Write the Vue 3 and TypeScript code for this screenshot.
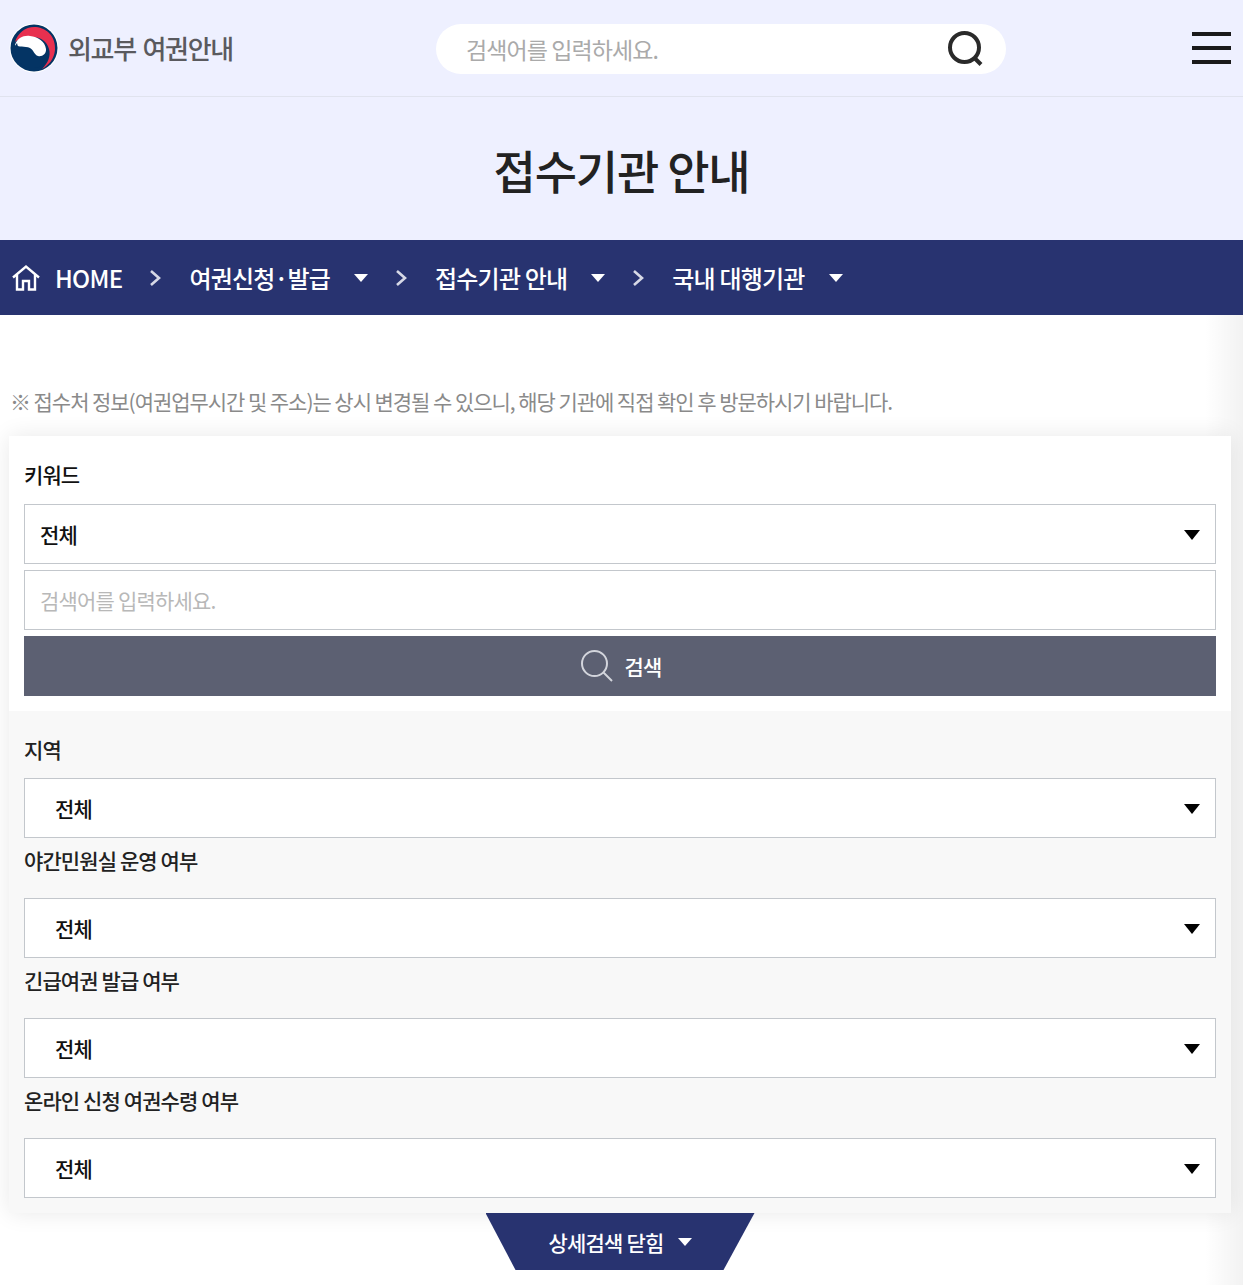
<script setup lang="ts">
const crumbs = ['여권신청·발급', '접수기관 안내', '국내 대행기관']
const filters = ['지역', '야간민원실 운영 여부', '긴급여권 발급 여부', '온라인 신청 여권수령 여부']
</script>

<template>
  <div class="page">
    <header class="top">
      <div class="logo">
        <svg width="50" height="50" viewBox="0 0 50 50">
          <circle cx="25" cy="25" r="24.5" fill="#fff" />
          <circle cx="25" cy="25" r="23.5" fill="#043464" />
          <path d="M6 19C9 9 18 3 27 4C38 5 47 14 46 27C45 36 40 42 33 46C39 40 42 33 40 26C38 18 31 14 24 14C16 14 9 16 6 19Z" fill="#e8304f" />
          <path d="M6 22C8 15 15 12 21 13C29 14 36 18 37 26C37.500 31 33 34 29 33C25 32 25 27 21 25C16 22.500 9 25 6 22Z" fill="#fff" />
          <path d="M8 20C9 27 14 25 19 26C23 27 24 33 30 34C35 34.500 39 30 38 24C42 33 37 44 25 45C14 46 5 36 6 25C6.200 23 7 21 8 20Z" fill="#043464" />
        </svg>
        <span class="logo-text">외교부 여권안내</span>
      </div>
      <div class="top-search">
        <span class="top-placeholder">검색어를 입력하세요.</span>
        <svg width="40" height="40" viewBox="0 0 40 40" fill="none" stroke="#2a2a2a">
          <circle cx="18.500" cy="18.500" r="14.500" stroke-width="4" />
          <path d="M28.500 29L35 35.500" stroke-width="4" />
        </svg>
      </div>
      <button class="menu" aria-label="menu"><i></i><i></i><i></i></button>
    </header>

    <section class="title">
      <h1>접수기관 안내</h1>
    </section>

    <nav class="crumbs">
      <svg class="home" width="30" height="28" viewBox="0 0 30 28" fill="none" stroke="#fff" stroke-width="2.400">
        <path d="M2 13.500L15 2.500L28 13.500" />
        <path d="M6 11V25.500H12V17H18V25.500H24V11" />
      </svg>
      <span class="home-text">HOME</span>
      <template v-for="c in crumbs" :key="c">
        <svg class="sep" width="12" height="18" viewBox="0 0 12 18" fill="none" stroke="#d7d9e6" stroke-width="2.600">
          <path d="M2 2L10 9L2 16" />
        </svg>
        <span class="crumb">{{ c }}</span>
        <span class="caret"></span>
      </template>
    </nav>

    <p class="note">※ 접수처 정보(여권업무시간 및 주소)는 상시 변경될 수 있으니, 해당 기관에 직접 확인 후 방문하시기 바랍니다.</p>

    <div class="panel">
      <div class="keyword">
        <div class="label first">키워드</div>
        <div class="field keyword-field">
          전체
          <span class="arrow"></span>
        </div>
        <div class="field input">검색어를 입력하세요.</div>
        <button class="search-btn">
          <svg width="36" height="36" viewBox="0 0 36 36" fill="none" stroke="#d3d5dc" stroke-width="2">
            <circle cx="15.500" cy="15.500" r="12.500" />
            <path d="M24.500 24.500L33 33" />
          </svg>
          <span>검색</span>
        </button>
      </div>
      <div class="details">
        <div v-for="f in filters" :key="f" class="filter">
          <div class="label">{{ f }}</div>
          <div class="field">
            전체
            <span class="arrow"></span>
          </div>
        </div>
      </div>
    </div>

    <div class="toggle-wrap">
      <button class="toggle">
        <span>상세검색 닫힘</span>
        <span class="caret small"></span>
      </button>
    </div>
  </div>
</template>

<style>
html,
body {
  margin: 0;
  background: #fff;
}
</style>

<style scoped>
.page {
  position: relative;
  width: 1243px;
  height: 1285px;
  overflow: hidden;
  background: linear-gradient(to right, rgba(0, 0, 0, 0) 1205px, rgba(0, 0, 0, 0.05) 1243px), #fff;
  font-family: "Noto Sans CJK KR", "Noto Sans", sans-serif;
  color: #222;
}

.top {
  height: 96px;
  border-bottom: 1px solid #e0e3ee;
  background: #eef0ff;
  display: flex;
  align-items: center;
  position: relative;
}

.logo {
  display: flex;
  align-items: center;
  gap: 9px;
  margin-left: 9px;
  width: 427px;
  flex: none;
  margin-top: -1px;
}

.logo-text {
  font-size: 26px;
  font-weight: 500;
  letter-spacing: -1.3px;
  color: #5a5a5e;
  word-spacing: 2px;
}

.top-search {
  width: 570px;
  height: 50px;
  margin-top: 2px;
  box-sizing: border-box;
  padding: 0 10px 0 30px;
  border-radius: 25px;
  background: #fff;
  display: flex;
  align-items: center;
  justify-content: space-between;
}

.top-placeholder {
  font-size: 23px;
  letter-spacing: -0.9px;
  color: #aaa;
}

.top-search svg {
  margin-right: 10px;
}

.menu {
  margin-left: auto;
  margin-right: 12px;
  width: 39px;
  padding: 0;
  border: 0;
  background: none;
  display: flex;
  flex-direction: column;
  gap: 10px;
}

.menu i {
  display: block;
  height: 4px;
  background: #1a1a1a;
}

.title {
  height: 143px;
  background: #eef0ff;
  display: flex;
  align-items: center;
  justify-content: center;
}

.title h1 {
  margin: 0;
  font-size: 46px;
  font-weight: 500;
  letter-spacing: -1.2px;
  color: #222;
}

.crumbs {
  height: 75px;
  background: #283370;
  display: flex;
  align-items: center;
  color: #fff;
  padding-left: 11px;
}

.home {
  margin-right: 14px;
}

.home-text {
  font-size: 24px;
  font-weight: 500;
  letter-spacing: -0.7px;
  margin-right: 27px;
}

.sep {
  margin-right: 28px;
}

.crumb {
  font-size: 24px;
  font-weight: 500;
  letter-spacing: -0.8px;
  margin-right: 24px;
}

.caret {
  width: 0;
  height: 0;
  border-left: 7.500px solid transparent;
  border-right: 7.500px solid transparent;
  border-top: 8px solid #fff;
  margin-right: 27px;
}

.note {
  margin: 0;
  padding: 71px 0 0 10px;
  height: 50px;
  font-size: 21px;
  line-height: 30px;
  letter-spacing: -1.05px;
  color: #8a8a8a;
}

.panel {
  margin-left: 9px;
  width: 1222px;
  box-shadow: 0 0 22px rgba(0, 0, 0, 0.09);
}

.keyword {
  background: #fff;
  padding: 15px;
  height: 245px;
}

.details {
  background: #f8f8f8;
  padding: 15px;
}

.label {
  height: 52px;
  box-sizing: border-box;
  padding-top: 7px;
  font-size: 21px;
  line-height: 32px;
  font-weight: 500;
  letter-spacing: -0.9px;
  color: #222;
}

.label.first {
  height: 53px;
  color: #111;
}

.filter .label {
  height: 60px;
  padding-top: 6px;
}

.filter:first-child .label {
  height: 52px;
  padding-top: 7px;
}

.field {
  position: relative;
  box-sizing: border-box;
  height: 60px;
  border: 1px solid #c3c7cc;
  background: #fff;
  padding-left: 30px;
  font-size: 21px;
  line-height: 58px;
  font-weight: 500;
  letter-spacing: -0.9px;
  color: #111;
}

.keyword-field {
  padding-left: 15px;
}

.input {
  margin-top: 6px;
  padding-left: 15px;
  font-weight: 400;
  letter-spacing: -0.8px;
  color: #b8b8b8;
}

.arrow {
  position: absolute;
  right: 15px;
  top: 25px;
  width: 0;
  height: 0;
  border-left: 8.500px solid transparent;
  border-right: 8.500px solid transparent;
  border-top: 10px solid #000;
}

.search-btn {
  margin-top: 6px;
  width: 100%;
  height: 60px;
  border: 0;
  padding: 0;
  background: #5c6072;
  color: #fff;
  font-family: inherit;
  font-size: 21px;
  font-weight: 500;
  letter-spacing: -0.9px;
  display: flex;
  align-items: center;
  justify-content: center;
  gap: 10px;
}

.toggle-wrap {
  display: flex;
  justify-content: center;
  padding-right: 3px;
}

.toggle {
  width: 269px;
  height: 57px;
  border: 0;
  padding: 0;
  background: #283370;
  clip-path: polygon(0 0, 100% 0, 238px 100%, 30px 100%);
  color: #fff;
  font-family: inherit;
  font-size: 21px;
  font-weight: 500;
  letter-spacing: -0.8px;
  display: flex;
  align-items: center;
  justify-content: center;
  gap: 14px;
}

.caret.small {
  margin-right: 0;
  border-top-width: 8px;
}
</style>
